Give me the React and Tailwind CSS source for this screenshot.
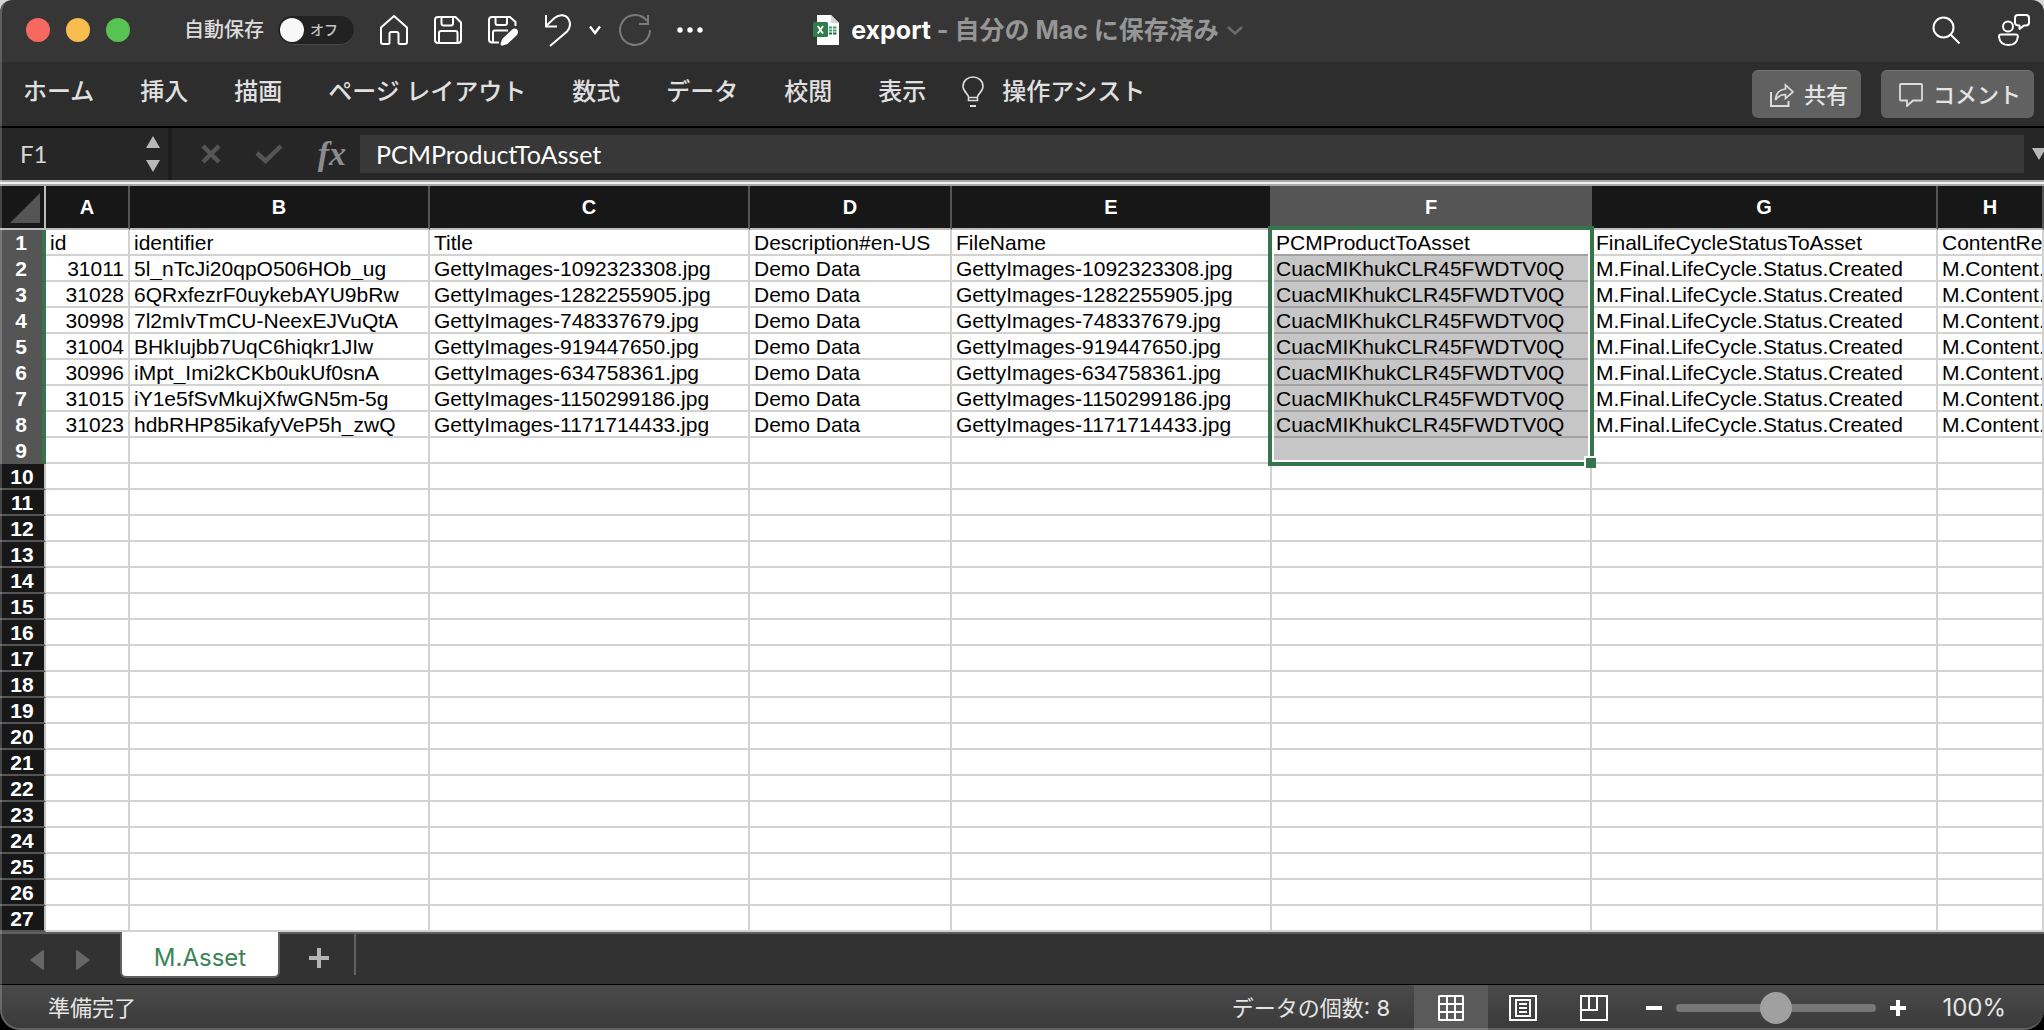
import React, { useState } from 'react';

const COLUMNS = [
  { key: 'A', width: 'w-[84px]' },
  { key: 'B', width: 'w-[300px]' },
  { key: 'C', width: 'w-[320px]' },
  { key: 'D', width: 'w-[202px]' },
  { key: 'E', width: 'w-[320px]' },
  { key: 'F', width: 'w-[320px]' },
  { key: 'G', width: 'w-[346px]' },
  { key: 'H', width: '' },
];

const ASSETS = [
  ['31011', '5l_nTcJi20qpO506HOb_ug', 'GettyImages-1092323308.jpg'],
  ['31028', '6QRxfezrF0uykebAYU9bRw', 'GettyImages-1282255905.jpg'],
  ['30998', '7l2mIvTmCU-NeexEJVuQtA', 'GettyImages-748337679.jpg'],
  ['31004', 'BHkIujbb7UqC6hiqkr1JIw', 'GettyImages-919447650.jpg'],
  ['30996', 'iMpt_Imi2kCKb0ukUf0snA', 'GettyImages-634758361.jpg'],
  ['31015', 'iY1e5fSvMkujXfwGN5m-5g', 'GettyImages-1150299186.jpg'],
  ['31023', 'hdbRHP85ikafyVeP5h_zwQ', 'GettyImages-1171714433.jpg'],
];

const HEADINGS = [
  'id',
  'identifier',
  'Title',
  'Description#en-US',
  'FileName',
  'PCMProductToAsset',
  'FinalLifeCycleStatusToAsset',
  'ContentRe',
];

const ROWS = [
  HEADINGS,
  ...ASSETS.map(([id, identifier, file]) => [
    id,
    identifier,
    file,
    'Demo Data',
    file,
    'CuacMIKhukCLR45FWDTV0Q',
    'M.Final.LifeCycle.Status.Created',
    'M.Content.',
  ]),
];

const ROW_COUNT = 27;
const SELECTED_COLUMN = 'F';
const SELECTED_ROWS = 9;

const TABS = ['ホーム', '挿入', '描画', 'ページ レイアウト', '数式', 'データ', '校閲', '表示'];

const HomeIcon = () => (
  <svg viewBox="0 0 28 32" className="h-8 w-7" fill="none" stroke="white" strokeWidth="2" strokeLinejoin="round">
    <path d="M1 13.5 L14 2 L27 13.5 V28 Q27 30 25 30 H20 Q18.500 30 18.500 28.500 V20 Q18.500 18 16.500 18 H11.500 Q9.500 18 9.500 20 V28.500 Q9.500 30 8 30 H3 Q1 30 1 28 Z" />
  </svg>
);

const SaveIcon = () => (
  <svg viewBox="0 0 28 28" className="size-7" fill="none" stroke="white" strokeWidth="2">
    <path d="M4 1 H21.500 L27 6.500 V24 Q27 27 24 27 H4 Q1 27 1 24 V4 Q1 1 4 1 Z" />
    <path d="M7.500 1 V7.500 Q7.500 9.500 9.500 9.500 H17 Q19 9.500 19 7.500 V1" />
    <path d="M5 27 V17 Q5 15 7 15 H21.500 Q23.500 15 23.500 17 V27" />
  </svg>
);

const SaveEditIcon = () => (
  <svg viewBox="0 0 31 31" className="size-[31px]" fill="none" stroke="white" strokeWidth="2">
    <path d="M27.500 11 V7 L22 2 H4 Q1 2 1 5 V24.500 Q1 27.500 4 27.500 H11" />
    <path d="M7.500 2 V8 Q7.500 10 9.500 10 H17 Q19 10 19 8 V2" />
    <path d="M5 27 V17.500 Q5 15.500 7 15.500 H20" />
    <path d="M13.500 29 L15 24.500 L24.500 15.500 Q27 13.800 28.500 15.500 Q29.800 17 28 19.500 L19 28 L14 29.500 Z" fill="white" />
  </svg>
);

const UndoIcon = () => (
  <svg viewBox="1 0 26 33" className="h-[33px] w-[26px]" fill="none" stroke="white" strokeWidth="2">
    <path d="M2 1 V12.500 H13" />
    <path d="M2 12 L10.500 4 C16 -0.500 22 1 24.500 5 C27 9.500 26 14 23 17.500 L6 32" />
  </svg>
);

const RedoIcon = () => (
  <svg viewBox="1 0 32 33" className="h-[33px] w-8" fill="none" stroke="#7a7a7a" strokeWidth="2">
    <path d="M29 7 A15 15 0 1 0 32 16" />
    <path d="M30 1 V10 H21" />
  </svg>
);

const ExcelFileIcon = () => (
  <svg viewBox="0 0 26 30" className="h-[30px] w-[26px]">
    <path d="M4 0 H18 L26 8 V30 H4 Z" fill="#fff" />
    <path d="M18 0 V8 H26 Z" fill="#d5d5d5" />
    <path d="M16 11.500 h3 v2 h-3z M20 11.500 h3.500 v2 h-3.500z M16 14.500 h3 v2 h-3z M20 14.500 h3.500 v2 h-3.500z" fill="#35a163" />
    <path d="M16 17.500 h3 v2 h-3z M20 17.500 h3.500 v2 h-3.500z" fill="#1f6b40" />
    <rect y="7" width="15" height="15" rx="1.500" fill="#2e7d4b" />
    <path d="M4.800 11 L10 18.500 M10 11 L4.800 18.500" stroke="#fff" strokeWidth="1.800" />
  </svg>
);

const SearchIcon = () => (
  <svg viewBox="0 0 28 28" className="size-7" fill="none" stroke="white" strokeWidth="2">
    <circle cx="11.500" cy="11.500" r="10" />
    <path d="M18.500 18.500 L27.500 27.500" />
  </svg>
);

const PresenceIcon = () => (
  <svg viewBox="0 0 32 32" className="size-8" fill="none" stroke="white" strokeWidth="2">
    <circle cx="10" cy="12.500" r="5" />
    <path d="M3 20.500 H18 Q20 20.500 19.800 23 Q19 31 10.500 31 Q2 31 1 23 Q0.800 20.500 3 20.500 Z" />
    <path d="M20 1 H28 Q31 1 31 4 V8.500 Q31 11.500 28 11.500 H26 L21.500 15 V11.500 Q17 11.500 17 8.500 V4 Q17 1 20 1 Z" strokeLinejoin="round" />
  </svg>
);

const BulbIcon = () => (
  <svg viewBox="0 0 22 32" className="h-8 w-[22px]" fill="none" stroke="#dcdcdc" strokeWidth="1.600">
    <path d="M6.500 24.500 V21 C6.500 18 1 15.500 1 10.500 C1 5 5.500 1 11 1 C16.500 1 21 5 21 10.500 C21 15.500 15.500 18 15.500 21 V24.500 Z M6.500 21.500 H15.500" />
    <path d="M8 30 H14" strokeWidth="2" />
  </svg>
);

const ShareIcon = () => (
  <svg viewBox="0 0 24 24" className="size-6" fill="none" stroke="#dcdcdc" strokeWidth="2">
    <path d="M1 9 V23 H18.500 V18" />
    <path d="M5.500 17 C6 10 9.500 6.500 15.500 6 V2 L23 9 L15.500 15.500 V11.500 C11 11.500 8 13 5.500 17 Z" strokeWidth="1.700" />
  </svg>
);

const CommentIcon = () => (
  <svg viewBox="0 0 24 24" className="size-6" fill="none" stroke="#dcdcdc" strokeWidth="1.800">
    <path d="M2 1 H22 Q23 1 23 2 V16.500 Q23 17.500 22 17.500 H14 L8 23 V17.500 H2 Q1 17.500 1 16.500 V2 Q1 1 2 1 Z" />
  </svg>
);

const TitleBar = () => {
  const [autoSave, setAutoSave] = useState(false);

  return (
    <header className="flex h-[62px] shrink-0 items-center bg-[#363636] pr-[14px] pb-[2px] pl-[26px]">
      <div className="flex flex-1 items-center">
        <div className="flex gap-4">
          <button aria-label="閉じる" className="size-6 rounded-full bg-[#f6695e]"></button>
          <button aria-label="しまう" className="size-6 rounded-full bg-[#f8bd4e]"></button>
          <button aria-label="拡大" className="size-6 rounded-full bg-[#57c353]"></button>
        </div>
        <label className="ml-[54px] flex items-center gap-[14px] text-[20px] leading-7 font-medium text-[#dcdcdc]">
          自動保存
          <span className="relative flex h-7 w-[76px] items-center rounded-full bg-[#222] shadow-[0_1px_0_#484848]">
            <input
              type="checkbox"
              role="switch"
              checked={autoSave}
              onChange={(e) => setAutoSave(e.target.checked)}
              className="peer absolute inset-0 appearance-none rounded-full"
            />
            <span className="ml-[2px] size-6 rounded-full bg-[#f8f8f8] peer-checked:ml-[50px]"></span>
            <span className="ml-[6px] text-[14px] text-[#c4c4c4] peer-checked:hidden">オフ</span>
          </span>
        </label>
        <div className="ml-[26px] flex items-center gap-[26px]">
          <button aria-label="ホーム画面"><HomeIcon /></button>
          <button aria-label="保存"><SaveIcon /></button>
          <button aria-label="名前を付けて保存"><SaveEditIcon /></button>
          <div className="flex items-center gap-[18px]">
            <button aria-label="元に戻す"><UndoIcon /></button>
            <button aria-label="元に戻すの一覧">
              <svg viewBox="0 0 12 10" className="h-[10px] w-3" fill="none" stroke="white" strokeWidth="2.400">
                <path d="M1 1.500 L6 8 L11 1.500" />
              </svg>
            </button>
            <button aria-label="やり直し"><RedoIcon /></button>
          </div>
          <button aria-label="その他">
            <svg viewBox="0 0 26 6" className="h-[6px] w-[26px]" fill="white">
              <circle cx="3" cy="3" r="2.700" />
              <circle cx="13" cy="3" r="2.700" />
              <circle cx="23" cy="3" r="2.700" />
            </svg>
          </button>
        </div>
      </div>

      <h1 className="flex items-center text-[25px] leading-8 font-bold text-[#969696]">
        <ExcelFileIcon />
        <span className="ml-3 whitespace-pre"><span className="text-white">export</span> - 自分の Mac に保存済み</span>
        <svg viewBox="0 0 16 9" className="ml-2 h-[9px] w-4" fill="none" stroke="#6c6c6c" strokeWidth="2.400">
          <path d="M1 1 L8 7.500 L15 1" />
        </svg>
      </h1>

      <div className="flex flex-1 items-center justify-end gap-[38px]">
        <button aria-label="検索"><SearchIcon /></button>
        <button aria-label="共同作業"><PresenceIcon /></button>
      </div>
    </header>
  );
};

const Ribbon = () => (
  <nav className="flex h-[66px] shrink-0 items-center justify-between border-b-2 border-black bg-[#2d2d2d] pr-[10px] pl-[23px]">
    <div className="flex items-center gap-[46px] pb-[5px] text-[24px] leading-8 font-medium whitespace-nowrap text-[#e0e0e0]">
      {TABS.map((tab) => (
        <button key={tab}>{tab}</button>
      ))}
      <button className="-ml-[10px] flex items-center gap-[18px]">
        <BulbIcon />
        操作アシスト
      </button>
    </div>
    <div className="flex gap-5 text-[22px] leading-8 font-medium text-[#e4e4e4]">
      <button className="flex h-12 items-center gap-[10px] rounded-md border-t border-[#757575] bg-[#616161] pr-[13px] pl-[18px]">
        <ShareIcon />
        共有
      </button>
      <button className="flex h-12 items-center gap-[10px] rounded-md border-t border-[#757575] bg-[#616161] pr-[13px] pl-[18px]">
        <CommentIcon />
        コメント
      </button>
    </div>
  </nav>
);

const FormulaBar = () => {
  const [cell, setCell] = useState('F1');
  const [formula, setFormula] = useState('PCMProductToAsset');

  return (
    <div className="flex h-[52px] shrink-0 items-center overflow-hidden bg-[#262626] font-[Lato,'Noto_Sans_CJK_JP',sans-serif]">
      <div className="flex h-full w-[172px] shrink-0 items-center justify-between border-r-4 border-[#1d1d1d] pr-2 pl-5">
        <input
          aria-label="名前ボックス"
          value={cell}
          onChange={(e) => setCell(e.target.value)}
          className="w-24 bg-transparent text-[24px] leading-8 text-[#d6d6d6] outline-none"
        />
        <div className="flex flex-col gap-3">
          <button aria-label="前のセル">
            <svg viewBox="0 0 14 12" className="h-3 w-[14px]" fill="#b8b8b8"><path d="M7 0 L14 12 H0 Z" /></svg>
          </button>
          <button aria-label="次のセル">
            <svg viewBox="0 0 14 12" className="h-3 w-[14px]" fill="#b8b8b8"><path d="M0 0 H14 L7 12 Z" /></svg>
          </button>
        </div>
      </div>
      <div className="flex w-[188px] shrink-0 items-center justify-between pr-[14px] pl-[29px]">
        <button aria-label="キャンセル">
          <svg viewBox="0 0 20 20" className="size-5" stroke="#555" strokeWidth="4.500"><path d="M2 2 L18 18 M18 2 L2 18" /></svg>
        </button>
        <button aria-label="入力">
          <svg viewBox="0 0 28 20" className="h-5 w-7" fill="none" stroke="#555" strokeWidth="4.500"><path d="M2 9 L10.500 17 L26 2" /></svg>
        </button>
        <button aria-label="関数の挿入" className="font-['Liberation_Serif',serif] text-[34px] leading-10 font-bold text-[#8c8c8c] italic">fx</button>
      </div>
      <input
        aria-label="数式バー"
        value={formula}
        onChange={(e) => setFormula(e.target.value)}
        className="h-[38px] min-w-0 flex-1 bg-[#383838] pr-4 pl-4 text-[25px] leading-8 text-white outline-none"
      />
      <button aria-label="数式バーの展開" className="w-5 shrink-0 overflow-hidden pl-2">
        <svg viewBox="0 0 14 12" className="h-3 w-[14px]" fill="#b8b8b8"><path d="M0 0 H14 L7 12 Z" /></svg>
      </button>
    </div>
  );
};

const Cell = ({ column, row }) => {
  const text = ROWS[row - 1] ? ROWS[row - 1][COLUMNS.findIndex((c) => c.key === column)] : '';
  const align = column === 'A' && row > 1 ? 'text-right' : 'text-left';

  // the active cell carries the frame that runs round the whole selection
  if (column === SELECTED_COLUMN && row === 1) {
    return (
      <td className="relative border-r-2 border-b-2 border-[#a2a2a2] px-1 pt-[2px] whitespace-nowrap">
        {text}
        <div className="pointer-events-none absolute -top-1 -right-1 -left-1 h-[240px] border-4 border-[#36744b] shadow-[inset_0_0_0_2px_white]">
          <span className="absolute -right-[6px] -bottom-[6px] size-3 border-t-2 border-l-2 border-white bg-[#36744b]"></span>
        </div>
      </td>
    );
  }

  const selected = column === SELECTED_COLUMN && row <= SELECTED_ROWS;
  return (
    <td
      className={`overflow-hidden border-r-2 border-b-2 px-1 pt-[2px] whitespace-nowrap ${align} ${
        selected ? 'border-[#a2a2a2] bg-[#c6c6c6]' : 'border-[#d2d2d2]'
      }`}
    >
      {text}
    </td>
  );
};

const Sheet = () => (
  <main className="min-h-0 flex-1 overflow-hidden bg-white">
    <table className="w-full table-fixed border-separate border-spacing-0 font-['Liberation_Sans',sans-serif] text-[21px] leading-[22px] text-black">
      <colgroup>
        <col className="w-[46px]" />
        {COLUMNS.map((c) => (
          <col key={c.key} className={c.width} />
        ))}
      </colgroup>
      <thead>
        <tr className="h-11">
          <th className="border-r-2 border-b-2 border-[#bdbdbd] bg-[#171717] p-0">
            <button aria-label="すべて選択" className="ml-auto block pt-[2px] pr-1">
              <svg viewBox="0 0 30 30" className="size-[30px]" fill="#555"><path d="M30 0 V30 H0 Z" /></svg>
            </button>
          </th>
          {COLUMNS.map((c) => (
            <th
              key={c.key}
              scope="col"
              className={`border-r-2 border-b-2 border-r-[#555] border-b-[#bdbdbd] p-0 text-[20px] font-bold text-white ${
                c.key === SELECTED_COLUMN ? 'bg-[#555]' : 'bg-[#171717]'
              }`}
            >
              {c.key}
            </th>
          ))}
        </tr>
      </thead>
      <tbody>
        {Array.from({ length: ROW_COUNT }, (_, i) => i + 1).map((row) => (
          <tr key={row} className="h-[26px]">
            <th
              scope="row"
              className={`border-b-2 p-0 pt-[2px] font-bold text-white ${
                row <= SELECTED_ROWS
                  ? 'border-r-4 border-r-[#36744b] border-b-[#555] bg-[#555]'
                  : 'border-r-2 border-r-[#c4c4c4] border-b-[#555] bg-[#171717]'
              }`}
            >
              {row}
            </th>
            {COLUMNS.map((c) => (
              <Cell key={c.key} column={c.key} row={row} />
            ))}
          </tr>
        ))}
      </tbody>
    </table>
  </main>
);

const SheetTabs = () => (
  <div className="flex h-[52px] shrink-0 items-start border-t-2 border-[#606060] bg-[#323232]">
    <div className="flex gap-8 pt-4 pl-[30px]">
      <button aria-label="前のシート">
        <svg viewBox="0 0 14 20" className="h-5 w-[14px]" fill="#666"><path d="M14 1 V19 Q14 20.500 12.500 19.500 L0 10 L12.500 0.500 Q14 -0.500 14 1 Z" /></svg>
      </button>
      <button aria-label="次のシート">
        <svg viewBox="0 0 14 20" className="h-5 w-[14px]" fill="#666"><path d="M0 1 V19 Q0 20.500 1.500 19.500 L14 10 L1.500 0.500 Q0 -0.500 0 1 Z" /></svg>
      </button>
    </div>
    <button className="-mt-[2px] ml-[30px] h-[46px] w-40 rounded-b-md border-2 border-t-0 border-[#606060] bg-white pt-2 text-[24px] leading-8 text-[#3a8456]">
      M.Asset
    </button>
    <div className="flex h-[41px] w-[76px] items-center justify-center border-r-2 border-[#606060] pt-[7px] pl-1">
      <button aria-label="シートの追加">
        <svg viewBox="0 0 20 20" className="size-5" stroke="#b4b4b4" strokeWidth="4"><path d="M10 0 V20 M0 10 H20" /></svg>
      </button>
    </div>
  </div>
);

const StatusBar = () => {
  const [zoom, setZoom] = useState(100);

  return (
    <footer className="flex h-[46px] shrink-0 items-center justify-between border-t border-black bg-linear-to-b from-[#4a4a4a] to-[#3a3a3a] pr-[38px] pl-12 text-[22px] leading-8 text-[#e6e6e6]">
      <span>準備完了</span>
      <div className="flex h-full items-center">
        <span>データの個数: 8</span>
        <div className="ml-6 flex h-full items-center">
          <button aria-label="標準" className="flex h-full w-[74px] items-center justify-center bg-[#5a5a5a]">
            <svg viewBox="0 0 26 26" className="size-[26px]" fill="none" stroke="white" strokeWidth="2">
              <rect x="1" y="1" width="24" height="24" rx="0.500" />
              <path d="M9 1 V25 M17 1 V25 M1 9 H25 M1 17 H25" />
            </svg>
          </button>
          <button aria-label="ページ レイアウト" className="flex h-full w-[70px] items-center justify-center">
            <svg viewBox="0 0 28 26" className="h-[26px] w-7" fill="none" stroke="white" strokeWidth="2">
              <path d="M1 1 H27 V25 H1 Z M7 5 H21 V21 H7 Z M10 9 H18 M10 13 H18 M10 17 H18" />
            </svg>
          </button>
          <button aria-label="改ページ プレビュー" className="flex h-full w-[72px] items-center justify-center">
            <svg viewBox="0 0 28 26" className="h-[26px] w-7" fill="none" stroke="white" strokeWidth="2">
              <path d="M1 1 H27 V25 H1 Z M9 1 V15 M17 1 V15 M1 15 H18" />
            </svg>
          </button>
        </div>
        <div className="ml-4 flex items-center gap-[14px]">
          <button aria-label="縮小" onClick={() => setZoom(Math.max(0, zoom - 10))}>
            <svg viewBox="0 0 16 16" className="size-4" stroke="white" strokeWidth="4"><path d="M0 8 H16" /></svg>
          </button>
          <input
            type="range"
            aria-label="ズーム"
            min="0"
            max="200"
            value={zoom}
            onChange={(e) => setZoom(Number(e.target.value))}
            className="h-2 w-[200px] appearance-none rounded-full bg-[#777] [&::-webkit-slider-thumb]:size-8 [&::-webkit-slider-thumb]:appearance-none [&::-webkit-slider-thumb]:rounded-full [&::-webkit-slider-thumb]:bg-[#a0a0a0]"
          />
          <button aria-label="拡大表示" onClick={() => setZoom(Math.min(200, zoom + 10))}>
            <svg viewBox="0 0 16 16" className="size-4" stroke="white" strokeWidth="4"><path d="M8 0 V16 M0 8 H16" /></svg>
          </button>
        </div>
        <span className="ml-8 w-[68px] text-right text-[24px]">{zoom}%</span>
      </div>
    </footer>
  );
};

const App = () => (
  <div className="h-screen bg-linear-to-b from-[#d8d8d8] to-black to-50%">
    <div className="relative flex h-full flex-col overflow-hidden rounded-t-xl rounded-b-[20px] font-[Inter,'Noto_Sans_CJK_JP',sans-serif]">
      <TitleBar />
      <Ribbon />
      <FormulaBar />
      <div className="h-[6px] shrink-0 border-y-2 border-[#a8a8a8] bg-[#f2f2f2]"></div>
      <Sheet />
      <SheetTabs />
      <StatusBar />
      <div className="pointer-events-none absolute inset-0 rounded-t-xl rounded-b-[20px] border-b-2 border-l-2 border-white/20"></div>
    </div>
  </div>
);

export default App;
